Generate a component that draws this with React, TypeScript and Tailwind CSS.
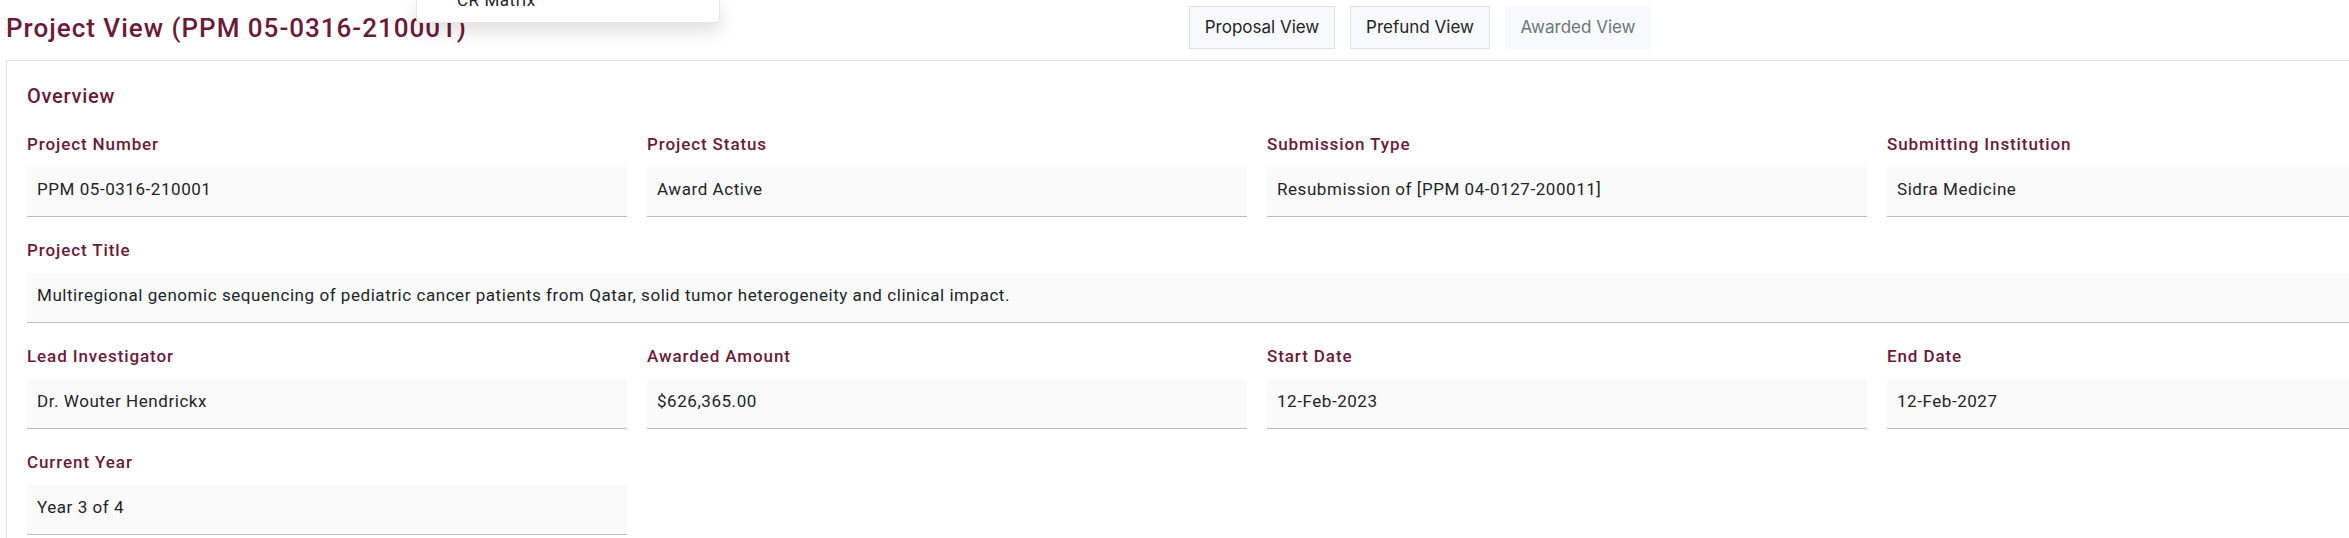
import React from "react";

type Field = { label: string; value: string; wide?: boolean };

const FIELDS: Field[] = [
  { label: "Project Number", value: "PPM 05-0316-210001" },
  { label: "Project Status", value: "Award Active" },
  { label: "Submission Type", value: "Resubmission of [PPM 04-0127-200011]" },
  { label: "Submitting Institution", value: "Sidra Medicine" },
  {
    label: "Project Title",
    value:
      "Multiregional genomic sequencing of pediatric cancer patients from Qatar, solid tumor heterogeneity and clinical impact.",
    wide: true,
  },
  { label: "Lead Investigator", value: "Dr. Wouter Hendrickx" },
  { label: "Awarded Amount", value: "$626,365.00" },
  { label: "Start Date", value: "12-Feb-2023" },
  { label: "End Date", value: "12-Feb-2027" },
  { label: "Current Year", value: "Year 3 of 4" },
];

const ReadOnlyField: React.FC<{ field: Field }> = ({ field }) => (
  <div className={field.wide ? "col-span-4" : ""}>
    <div className="text-[17px] leading-[24px] font-medium tracking-[0.9px] text-[#6b1a3a] mb-[11px]">
      {field.label}
    </div>
    <div className="h-[50px] bg-[#fafafa] border-b-[1.5px] border-[#bdbdbd] pl-[10px] pt-[10px] text-[17px] leading-[24px] tracking-[0.55px] text-[#212529] whitespace-nowrap">
      {field.value}
    </div>
  </div>
);

export default function App() {
  const btn =
    "h-[43px] flex items-center justify-center text-[17px] font-['Inter',sans-serif] border";

  return (
    <div className="w-screen h-[538px] overflow-hidden bg-white font-['Roboto',sans-serif]">
      <div className="relative pl-[6px]">
        {/* dropdown menu hanging over the header */}
        <div className="absolute top-0 left-[416px] z-10 w-[304px] h-[23px] overflow-hidden bg-white rounded-b-[5px] border border-t-0 border-black/10 shadow-[0_8px_18px_rgba(0,0,0,0.13)]">
          <div className="pl-[40px] mt-[-12px] text-[17px] leading-[24px] tracking-[0.55px] text-[#212529]">
            CR Matrix
          </div>
        </div>

        {/* HEADER */}
        <div className="flex items-start h-[60px]">
          <h1 className="flex-none w-[1183px] mt-[12px] text-[26px] leading-[32px] font-medium tracking-[1px] text-[#6b1a3a] whitespace-nowrap">
            Project View (PPM 05-0316-210001)
          </h1>
          <div className="flex gap-[15px] mt-[6px]">
            <button className={`${btn} w-[146px] bg-[#f8f9fa] border-[#dee2e6] text-[#212529]`}>
              Proposal View
            </button>
            <button className={`${btn} w-[140px] bg-[#f8f9fa] border-[#dee2e6] text-[#212529]`}>
              Prefund View
            </button>
            <button className={`${btn} w-[146px] bg-[#f8f9fa] border-[#f8f9fa] text-[#6c757d]`}>
              Awarded View
            </button>
          </div>
        </div>

        {/* CARD */}
        <div className="w-[2504px] border border-[#dee2e6] bg-white px-[20px] pt-[21px] pb-[20px]">
          <h2 className="text-[20px] leading-[28px] font-medium tracking-[0.75px] text-[#6b1a3a] mb-[22px]">
            Overview
          </h2>
          <div className="grid grid-cols-[repeat(4,600px)] gap-x-[20px] gap-y-[21px]">
            {FIELDS.map((f) => (
              <ReadOnlyField key={f.label} field={f} />
            ))}
          </div>
        </div>
      </div>
    </div>
  );
}
